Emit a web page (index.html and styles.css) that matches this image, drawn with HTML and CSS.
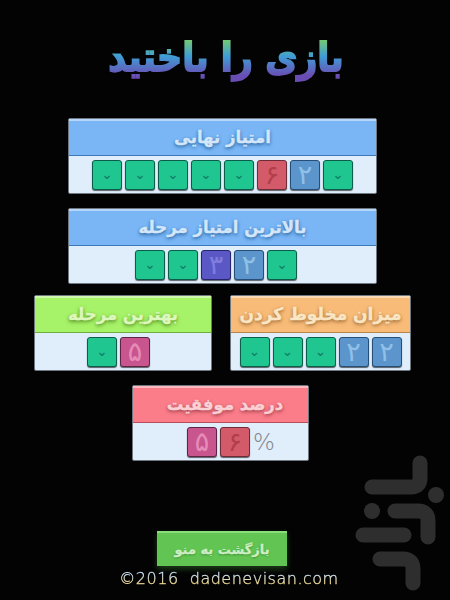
FILE: index.html
```html
<!DOCTYPE html>
<html lang="fa">
<head>
  <meta charset="UTF-8">
  <meta name="viewport" content="width=device-width, initial-scale=1.0">
  <title>بازی را باختید</title>
  <link rel="stylesheet" href="styles.css">
</head>
<body>
  <!-- bazaar watermark -->
  <svg class="watermark" width="105" height="160" viewBox="345 440 105 160" fill="none" stroke="#2e2e2e" stroke-width="15" stroke-linecap="round">
    <path d="M420 463V478q0 9-9 9H372"/>
    <path d="M395 511H418q10 0 10 10V537"/>
    <path d="M363 535H404"/>
    <path d="M380 559H403q10 0 10 10V583"/>
    <circle cx="436" cy="495" r="8" fill="#2e2e2e" stroke="none"/>
    <circle cx="372" cy="511" r="8" fill="#2e2e2e" stroke="none"/>
  </svg>

  <main class="page">
    <h1 class="title">بازی را باختید</h1>

    <section class="panel panel-wide blue">
      <h2>امتیاز نهایی</h2>
      <div class="tiles">
        <span class="tile zero">⌄</span>
        <span class="tile zero">⌄</span>
        <span class="tile zero">⌄</span>
        <span class="tile zero">⌄</span>
        <span class="tile zero">⌄</span>
        <span class="tile red">۶</span>
        <span class="tile steel">۲</span>
        <span class="tile zero">⌄</span>
      </div>
    </section>

    <section class="panel panel-wide blue">
      <h2>بالاترین امتیاز مرحله</h2>
      <div class="tiles level-tiles">
        <span class="tile zero">⌄</span>
        <span class="tile zero">⌄</span>
        <span class="tile indigo">۳</span>
        <span class="tile steel">۲</span>
        <span class="tile zero">⌄</span>
      </div>
    </section>

    <div class="row">
      <section class="panel panel-left lime">
        <h2>بهترین مرحله</h2>
        <div class="tiles best-tiles">
          <span class="tile zero">⌄</span>
          <span class="tile pink">۵</span>
        </div>
      </section>
      <section class="panel panel-right orange">
        <h2>میزان مخلوط کردن</h2>
        <div class="tiles">
          <span class="tile zero">⌄</span>
          <span class="tile zero">⌄</span>
          <span class="tile zero">⌄</span>
          <span class="tile steel">۲</span>
          <span class="tile steel">۲</span>
        </div>
      </section>
    </div>

    <section class="panel panel-small rose">
      <h2>درصد موفقیت</h2>
      <div class="tiles percent-tiles">
        <span class="tile pink">۵</span>
        <span class="tile red">۶</span>
        <span class="percent">%</span>
      </div>
    </section>

    <button class="back">بازگشت به منو</button>
    <p class="footer">©2016&nbsp; dadenevisan.com</p>
  </main>
</body>
</html>
```

FILE: styles.css
```css
html, body {
  margin: 0;
  padding: 0;
}
body {
  width: 450px;
  height: 600px;
  overflow: hidden;
  position: relative;
  background-color: #030303;
  font-family: "DejaVu Sans", sans-serif;
}
.watermark {
  position: absolute;
  left: 345px;
  top: 440px;
}
.page {
  position: relative;
  display: flex;
  flex-direction: column;
  align-items: center;
  height: 600px;
}
.title {
  height: 118px;
  margin: 0 0 0 2px;
  padding-top: 33px;
  box-sizing: border-box;
  font-size: 35px;
  line-height: 50px;
  font-weight: bold;
  -webkit-text-stroke: 1.6px transparent;
  background: linear-gradient(#7ed060 14%, #3f9ed6 48%, #6a4db4 82%);
  -webkit-background-clip: text;
  background-clip: text;
  color: transparent;
  background-size: 100% 50px;
  background-position: 0 33px;
  background-repeat: no-repeat;
  transform: scaleY(1.14);
  transform-origin: 50% 62px;
}
.panel {
  height: 76px;
  box-sizing: border-box;
  border: 1px solid #6f7780;
  border-radius: 2px;
  background-color: #e0edfb;
  margin-bottom: 14px;
}
.panel h2 {
  height: 37px;
  margin: 0;
  box-sizing: border-box;
  border-top: 2px solid rgba(255, 255, 255, 0.45);
  font-size: 16.5px;
  line-height: 33px;
  text-align: center;
  font-weight: bold;
  -webkit-text-stroke: 0.4px currentColor;
}
.panel-wide {
  width: 309px;
  align-self: flex-start;
  margin-left: 68px;
}
.panel-left {
  width: 178px;
}
.panel-right {
  width: 181px;
}
.panel-small {
  width: 177px;
  align-self: flex-start;
  margin-left: 132px;
}
.blue h2 {
  background-color: #7ab6f6;
  border-bottom: 1px solid #3d78b8;
  color: #d3e6fa;
  text-shadow: 0 1px 3px #2f6aa5, 0 2px 4px #4a86c4;
}
.lime h2 {
  background-color: #a6f268;
  border-bottom: 1px solid #6fae3a;
  color: #dcf8bc;
  text-shadow: 0 1px 3px #5f9a2e, 0 2px 4px #74b23e;
}
.orange h2 {
  background-color: #f8bb78;
  border-bottom: 1px solid #b8844a;
  color: #fbe6c4;
  text-shadow: 0 1px 3px #a5713c, 0 2px 4px #c08a50;
  font-size: 17px;
}
.rose h2 {
  background-color: #fb7d8a;
  border-bottom: 1px solid #b84e5a;
  color: #fbd0d4;
  text-shadow: 0 1px 3px #a84450, 0 2px 4px #c25864;
  padding-left: 9px;
}
.tiles {
  display: flex;
  justify-content: center;
  align-items: center;
  gap: 3px;
  height: 37px;
}
.level-tiles {
  padding-right: 13px;
}
.best-tiles {
  padding-right: 9px;
}
.percent-tiles {
  padding-left: 17px;
}
.tile {
  width: 30px;
  height: 30px;
  box-sizing: border-box;
  display: flex;
  justify-content: center;
  align-items: center;
  border: 1px solid #333;
  border-radius: 3px;
  font-size: 27px;
  line-height: 28px;
  box-shadow: 0 1px 1px rgba(0, 0, 0, 0.6);
}
.zero {
  background-color: #20c690;
  border-color: #0b5c48;
  color: #128068;
  font-size: 13px;
  font-weight: bold;
}
.red {
  background-color: #d35a68;
  border-color: #6e2c38;
  color: #b23e4c;
}
.steel {
  background-color: #5c95cb;
  border-color: #254e78;
  color: #8fc0e8;
}
.indigo {
  background-color: #5a58c4;
  border-color: #26246c;
  color: #7f7de0;
}
.pink {
  background-color: #c9558f;
  border-color: #5e2444;
  color: #e68cb8;
}
.percent {
  width: 18px;
  color: #7f858c;
  font-size: 23px;
  font-weight: 200;
}
.row {
  align-self: stretch;
  display: flex;
  justify-content: space-between;
  margin-top: -3px;
  padding: 0 39px 0 34px;
  height: 90px;
}
.back {
  width: 130px;
  height: 35px;
  margin: 56px 6px 0 0;
  padding: 0;
  border: none;
  border-top: 2px solid #8ade78;
  background-color: #62c452;
  color: #cdeec4;
  font-family: inherit;
  font-size: 13px;
  font-weight: bold;
  -webkit-text-stroke: 0.3px currentColor;
  text-shadow: 0 1px 2px #3c8a30;
  box-shadow: 0 3px 6px rgba(70, 150, 60, 0.4);
}
.footer {
  margin: 4px 0 0 8px;
  font-size: 16px;
  font-weight: 200;
  letter-spacing: 0.5px;
  line-height: 18px;
  -webkit-text-stroke: 0.4px transparent;
  background: linear-gradient(#cfe2f6 25%, #f2dc90 75%);
  -webkit-background-clip: text;
  background-clip: text;
  color: transparent;
}
```
